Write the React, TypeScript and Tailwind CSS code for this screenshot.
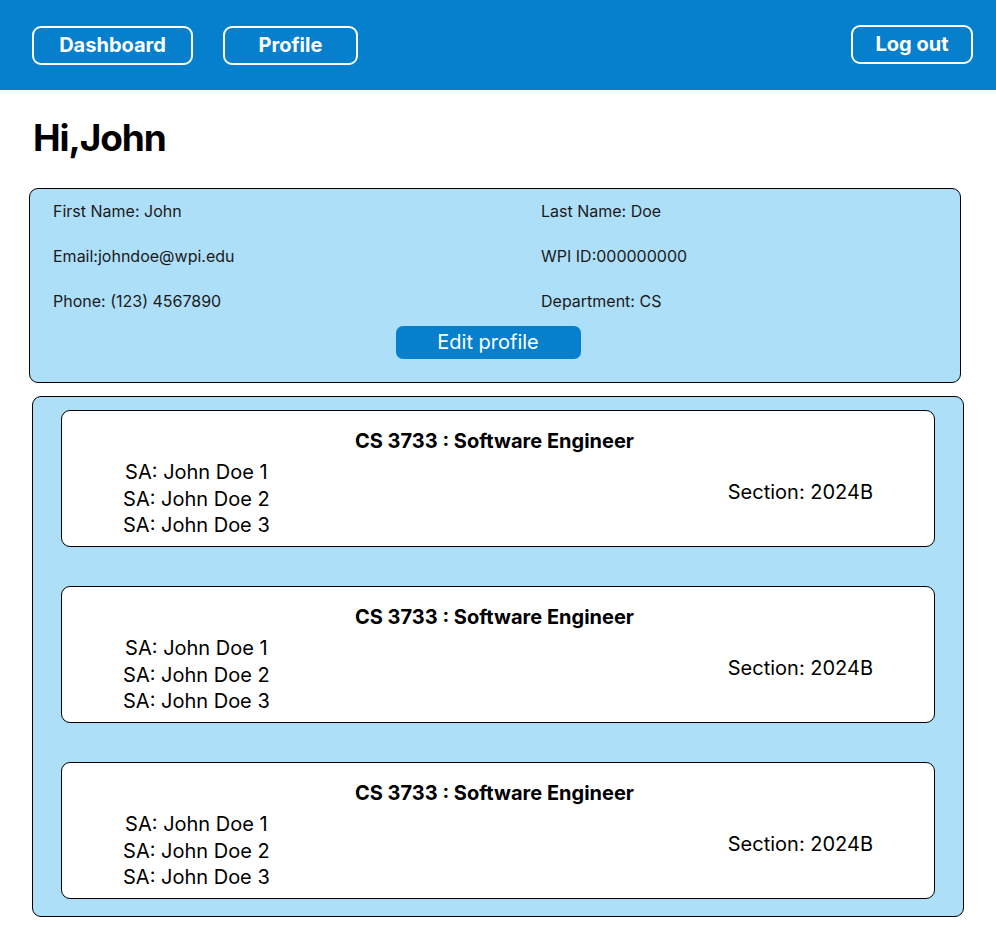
import React from "react";

const courses = [0, 1, 2];

function CourseCard() {
  return (
    <div className="h-[137px] rounded-[9px] border border-black bg-white pt-[18px] px-[61px]">
      <div className="pr-[7px] text-center text-[20px] font-bold leading-[24px] text-black">
        CS 3733 : Software Engineer
      </div>
      <div className="mt-[6px] flex items-center justify-between">
        <div className="flex flex-col items-center text-[20px] leading-[26.5px] text-black">
          <span>SA: John Doe 1</span>
          <span>SA: John Doe 2</span>
          <span>SA: John Doe 3</span>
        </div>
        <div className="mb-[14px] text-[20px] leading-[26px] text-black">Section: 2024B</div>
      </div>
    </div>
  );
}

export default function App() {
  return (
    <div className="min-h-[934px] bg-white font-['Inter',sans-serif]">
      <header className="flex h-[90px] items-center justify-between bg-[#067fcc] pl-[32px] pr-[23px]">
        <div className="flex gap-[30px]">
          <button className="h-[39px] w-[161px] rounded-[9px] border-2 border-white text-[20px] font-bold text-white">
            Dashboard
          </button>
          <button className="h-[39px] w-[135px] rounded-[9px] border-2 border-white text-[20px] font-bold text-white">
            Profile
          </button>
        </div>
        <button className="mb-[2px] h-[39px] w-[122px] rounded-[9px] border-2 border-white text-[20px] font-bold text-white">
          Log out
        </button>
      </header>

      <h1 className="ml-[33px] mt-[26px] text-[37px] font-bold leading-[44px] tracking-[-1.1px] text-black">Hi,John</h1>

      <section className="ml-[29px] mr-[35px] mt-[28px] rounded-[9px] border border-black bg-[#aedff9] pb-[23px] pt-[12px]">
        <div className="grid grid-cols-[488px_1fr] gap-y-[25px] pl-[23px] text-[16px] leading-[20px] text-[#1a1a1a]">
          <span>First Name: John</span>
          <span>Last Name: Doe</span>
          <span>Email:johndoe@wpi.edu</span>
          <span>WPI ID:000000000</span>
          <span>Phone: (123) 4567890</span>
          <span>Department: CS</span>
        </div>
        <div className="mt-[15px] flex justify-center pr-[14px]">
          <button className="h-[33px] w-[185px] rounded-[7px] bg-[#067fcc] text-[20px] leading-[33px] text-white">
            Edit profile
          </button>
        </div>
      </section>

      <section className="ml-[32px] mr-[32px] mt-[13px] flex flex-col gap-[39px] rounded-[9px] border border-black bg-[#aedff9] px-[28px] pb-[17px] pt-[13px]">
        {courses.map((c) => (
          <CourseCard key={c} />
        ))}
      </section>
    </div>
  );
}
